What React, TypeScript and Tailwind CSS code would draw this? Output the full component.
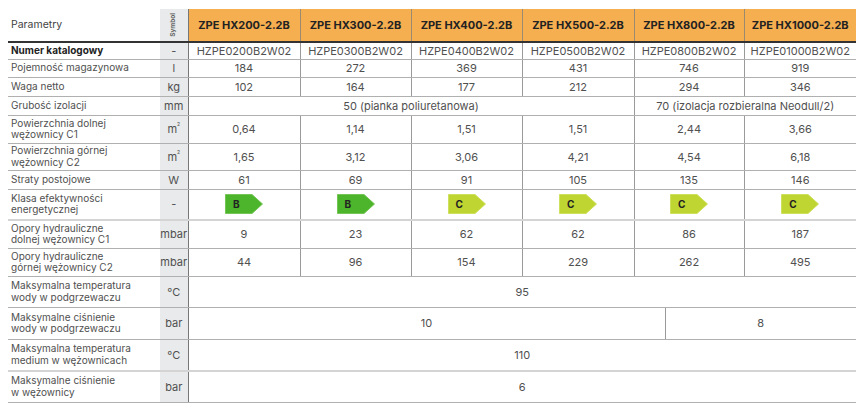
import type { ReactNode } from 'react';

const models = ['ZPE HX200-2.2B', 'ZPE HX300-2.2B', 'ZPE HX400-2.2B', 'ZPE HX500-2.2B', 'ZPE HX800-2.2B', 'ZPE HX1000-2.2B'];
const colWidths = [152, 28, 112, 111, 111, 112, 110, 112];

type Row = {
  label: ReactNode;
  sym: ReactNode;
  h: number;
  bold?: boolean;
  light?: boolean;
  cells: { v: ReactNode; span?: number }[];
};

const M2 = (
  <span>
    m<sup className="text-[5px] align-top relative top-[1px]">2</sup>
  </span>
);

function Badge({ cls }: { cls: 'B' | 'C' }) {
  const fill = cls === 'B' ? '#4db52c' : '#bfd531';
  const stroke = cls === 'B' ? '#74c556' : '#cfe05e';
  return (
    <div className="relative mx-auto w-[38px] h-[20px] flex items-center">
      <svg className="absolute inset-0" width="38" height="20" viewBox="0 0 38 20">
        <polygon points="0.5,0.5 27,0.5 37.5,10 27,19.5 0.5,19.5" fill={fill} stroke={stroke} strokeWidth="1" />
      </svg>
      <span className="relative pl-[8px] text-[10px] font-bold text-[#222]">{cls}</span>
    </div>
  );
}

const six = (vals: ReactNode[]) => vals.map((v) => ({ v }));

const rows: Row[] = [
  { label: 'Numer katalogowy', bold: true, sym: '-', h: 17, cells: six(['HZPE0200B2W02', 'HZPE0300B2W02', 'HZPE0400B2W02', 'HZPE0500B2W02', 'HZPE0800B2W02', 'HZPE01000B2W02']) },
  { label: 'Pojemność magazynowa', sym: 'l', h: 18, cells: six(['184', '272', '369', '431', '746', '919']) },
  { label: 'Waga netto', sym: 'kg', h: 19, cells: six(['102', '164', '177', '212', '294', '346']) },
  { label: 'Grubość izolacji', sym: 'mm', h: 19, cells: [{ v: '50 (pianka poliuretanowa)', span: 4 }, { v: '70 (izolacja rozbieralna Neodull/2)', span: 2 }] },
  { label: <>Powierzchnia dolnej<br />wężownicy C1</>, sym: M2, h: 28, cells: six(['0,64', '1,14', '1,51', '1,51', '2,44', '3,66']) },
  { label: <>Powierzchnia górnej<br />wężownicy C2</>, sym: M2, h: 27, cells: six(['1,65', '3,12', '3,06', '4,21', '4,54', '6,18']) },
  { label: 'Straty postojowe', sym: 'W', h: 19, cells: six(['61', '69', '91', '105', '135', '146']) },
  {
    label: <>Klasa efektywności<br />energetycznej</>,
    sym: '-',
    h: 31,
    light: true,
    cells: six([<Badge cls="B" />, <Badge cls="B" />, <Badge cls="C" />, <Badge cls="C" />, <Badge cls="C" />, <Badge cls="C" />]),
  },
  { label: <>Opory hydrauliczne<br />dolnej wężownicy C1</>, sym: 'mbar', h: 28, cells: six(['9', '23', '62', '62', '86', '187']) },
  { label: <>Opory hydrauliczne<br />górnej wężownicy C2</>, sym: 'mbar', h: 28, cells: six(['44', '96', '154', '229', '262', '495']) },
  { label: <>Maksymalna temperatura<br />wody w podgrzewaczu</>, sym: '°C', h: 31, cells: [{ v: '95', span: 6 }] },
  { label: <>Maksymalne ciśnienie<br />wody w podgrzewaczu</>, sym: 'bar', h: 32, cells: [{ v: 'split', span: 6 }] },
  { label: <>Maksymalna temperatura<br />medium w wężownicach</>, sym: '°C', h: 32, light: true, cells: [{ v: '110', span: 6 }] },
  { label: <>Maksymalne ciśnienie<br />w wężownicy</>, sym: 'bar', h: 31, cells: [{ v: '6', span: 6 }] },
];

export default function App() {
  return (
    <div className="bg-white w-[866px] h-[403px] overflow-hidden pt-[9px] pl-[8px] font-['Inter','Liberation_Sans',sans-serif] text-[11px] text-[#505050]">
      <table className="table-fixed border-collapse w-[848px]">
        <colgroup>
          {colWidths.map((w, i) => (
            <col key={i} style={{ width: w }} />
          ))}
        </colgroup>
        <thead>
          <tr className="h-[33px]">
            <th className="text-left font-normal pl-[3px] text-[10.5px] text-[#444] border-b-2 border-[#333]">Parametry</th>
            <th className="bg-[#e8eaeb] border-b-2 border-[#333] p-0">
              <div className="flex items-center justify-center h-[32px]">
                <span className="-rotate-90 text-[6.5px] text-[#666] whitespace-nowrap">Symbol</span>
              </div>
            </th>
            {models.map((m, i) => (
              <th
                key={m}
                className={`bg-[#f5ae50] font-bold text-[#222] border-b-2 border-b-[#333] border-l ${i === 0 ? 'border-l-[#777]' : 'border-l-[#9a8a70]'}`}
              >
                {m}
              </th>
            ))}
          </tr>
        </thead>
        <tbody>
          {rows.map((r, ri) => {
            const bottom = r.light ? 'border-b-2 border-b-[#d4d4d4]' : 'border-b border-b-[#b0b0b0]';
            return (
              <tr key={ri} style={{ height: r.h }}>
                <td className={`pl-[3px] py-0 text-[10px] leading-[11.5px] align-middle ${r.bold ? 'font-bold text-[#222]' : ''} ${bottom}`}>{r.label}</td>
                <td className={`bg-[#e8eaeb] text-center whitespace-nowrap p-0 leading-[12px] ${bottom}`}>{r.sym}</td>
                {r.cells.map((c, ci) =>
                  c.v === 'split' ? (
                    <td key={ci} colSpan={6} className={`p-0 border-l border-l-[#777] ${bottom}`}>
                      <div className="flex h-full items-stretch" style={{ height: r.h - 1 }}>
                        <div className="w-[477px] flex items-center justify-center border-r border-[#9a9a9a]">10</div>
                        <div className="flex-1 flex items-center justify-center">8</div>
                      </div>
                    </td>
                  ) : (
                    <td
                      key={ci}
                      colSpan={c.span}
                      className={`text-center p-0 leading-[12px] border-l ${ci === 0 ? 'border-l-[#777]' : 'border-l-[#9a9a9a]'} ${bottom}`}
                    >
                      {c.v}
                    </td>
                  ),
                )}
              </tr>
            );
          })}
        </tbody>
      </table>
    </div>
  );
}
